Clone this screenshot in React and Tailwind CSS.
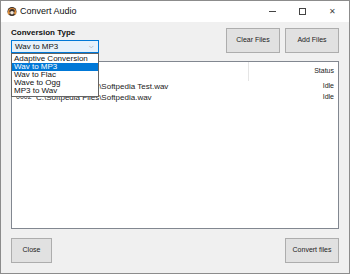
const options = ["Adaptive Conversion", "Wav to MP3", "Wav to Flac", "Wave to Ogg", "MP3 to Wav"];

const files = [
  { id: "0001", path: "C:\\Softpedia Files\\Softpedia Test.wav", status: "Idle" },
  { id: "0002", path: "C:\\Softpedia Files\\Softpedia.wav", status: "Idle" },
];

function AppIcon() {
  return (
    <svg width="10" height="11" viewBox="0 0 10 11">
      <circle cx="5" cy="5.5" r="4.5" fill="#3a2d26" />
      <path d="M1.5 6 A3.5 3.5 0 0 1 8.5 6" stroke="#d98a3a" strokeWidth="1.2" fill="none" />
      <rect x="0.8" y="5.5" width="2" height="3" rx="0.8" fill="#e0903c" />
      <rect x="7.2" y="5.5" width="2" height="3" rx="0.8" fill="#e0903c" />
      <circle cx="5" cy="6.8" r="1.8" fill="#f2e6d8" />
    </svg>
  );
}

function WinButton({ children, className = "" }) {
  return (
    <button
      className={`h-[25px] border border-[#adadad] bg-[#e1e1e1] text-[7px] text-[#222] ${className}`}
    >
      {children}
    </button>
  );
}

export default function App() {
  return (
    <div
      className="w-[350px] h-[274px] border border-[#8c8c8c] bg-[#f0f0f0] flex flex-col overflow-hidden"
      style={{ fontFamily: '"Liberation Sans", Arial, sans-serif' }}
    >
      {/* title bar */}
      <div className="h-[21px] bg-white flex items-center shrink-0">
        <div className="pl-[6px] pr-[3px] flex items-center">
          <AppIcon />
        </div>
        <span className="text-[9px] text-[#111]">Convert Audio</span>
        <div className="ml-auto flex items-center h-full pr-[2px]">
          <div className="w-[30px] flex justify-center">
            <div className="w-[7px] h-px bg-[#444]" />
          </div>
          <div className="w-[30px] flex justify-center">
            <div className="w-[7px] h-[7px] border border-[#444]" />
          </div>
          <div className="w-[30px] flex justify-center text-[8px] text-[#444] leading-none">✕</div>
        </div>
      </div>

      {/* body */}
      <div className="flex-1 flex flex-col px-[10px] pt-[6px] pb-[10px] relative">
        <div className="flex justify-between">
          <div className="flex flex-col">
            <div className="h-[12px] text-[8px] font-bold text-[#111] leading-[10px]">Conversion Type</div>
            <div className="w-[88px] h-[13px] border border-[#0078d7] bg-[#e5f1fb] flex items-center pl-[3px] text-[8px] text-[#111]">
              <span>Wav to MP3</span>
              <span className="ml-auto pr-[4px] text-[6px] text-[#666]">⌵</span>
            </div>
          </div>
          <div className="flex gap-[5px]">
            <WinButton className="w-[54px]">Clear Files</WinButton>
            <WinButton className="w-[54px]">Add Files</WinButton>
          </div>
        </div>

        {/* list view */}
        <div className="mt-[8px] h-[168px] border border-[#828790] bg-white flex flex-col">
          <div className="h-[19px] flex text-[7px] text-[#222]">
            <div className="w-[237px] border-r border-[#e5e5e5]" />
            <div className="flex-1 flex items-center justify-end pr-[4px]">Status</div>
          </div>
          {files.map((f) => (
            <div key={f.id} className="h-[11px] flex items-center text-[8px] text-[#222]">
              <span className="w-[24px] pl-[4px] text-[7px]">{f.id}</span>
              <span>{f.path}</span>
              <span className="ml-auto pr-[4px] text-[7px]">{f.status}</span>
            </div>
          ))}
        </div>

        <div className="mt-[9px] flex justify-between">
          <WinButton className="w-[41px]">Close</WinButton>
          <WinButton className="w-[54px]">Convert files</WinButton>
        </div>

        {/* open dropdown */}
        <div className="absolute left-[10px] top-[31px] w-[88px] border border-[#646464] bg-white py-px">
          {options.map((o) => (
            <div
              key={o}
              className={`h-[8px] flex items-center pl-[2px] text-[8px] leading-none ${
                o === "Wav to MP3" ? "bg-[#0078d7] text-white" : "text-[#111]"
              }`}
            >
              {o}
            </div>
          ))}
        </div>
      </div>
    </div>
  );
}
